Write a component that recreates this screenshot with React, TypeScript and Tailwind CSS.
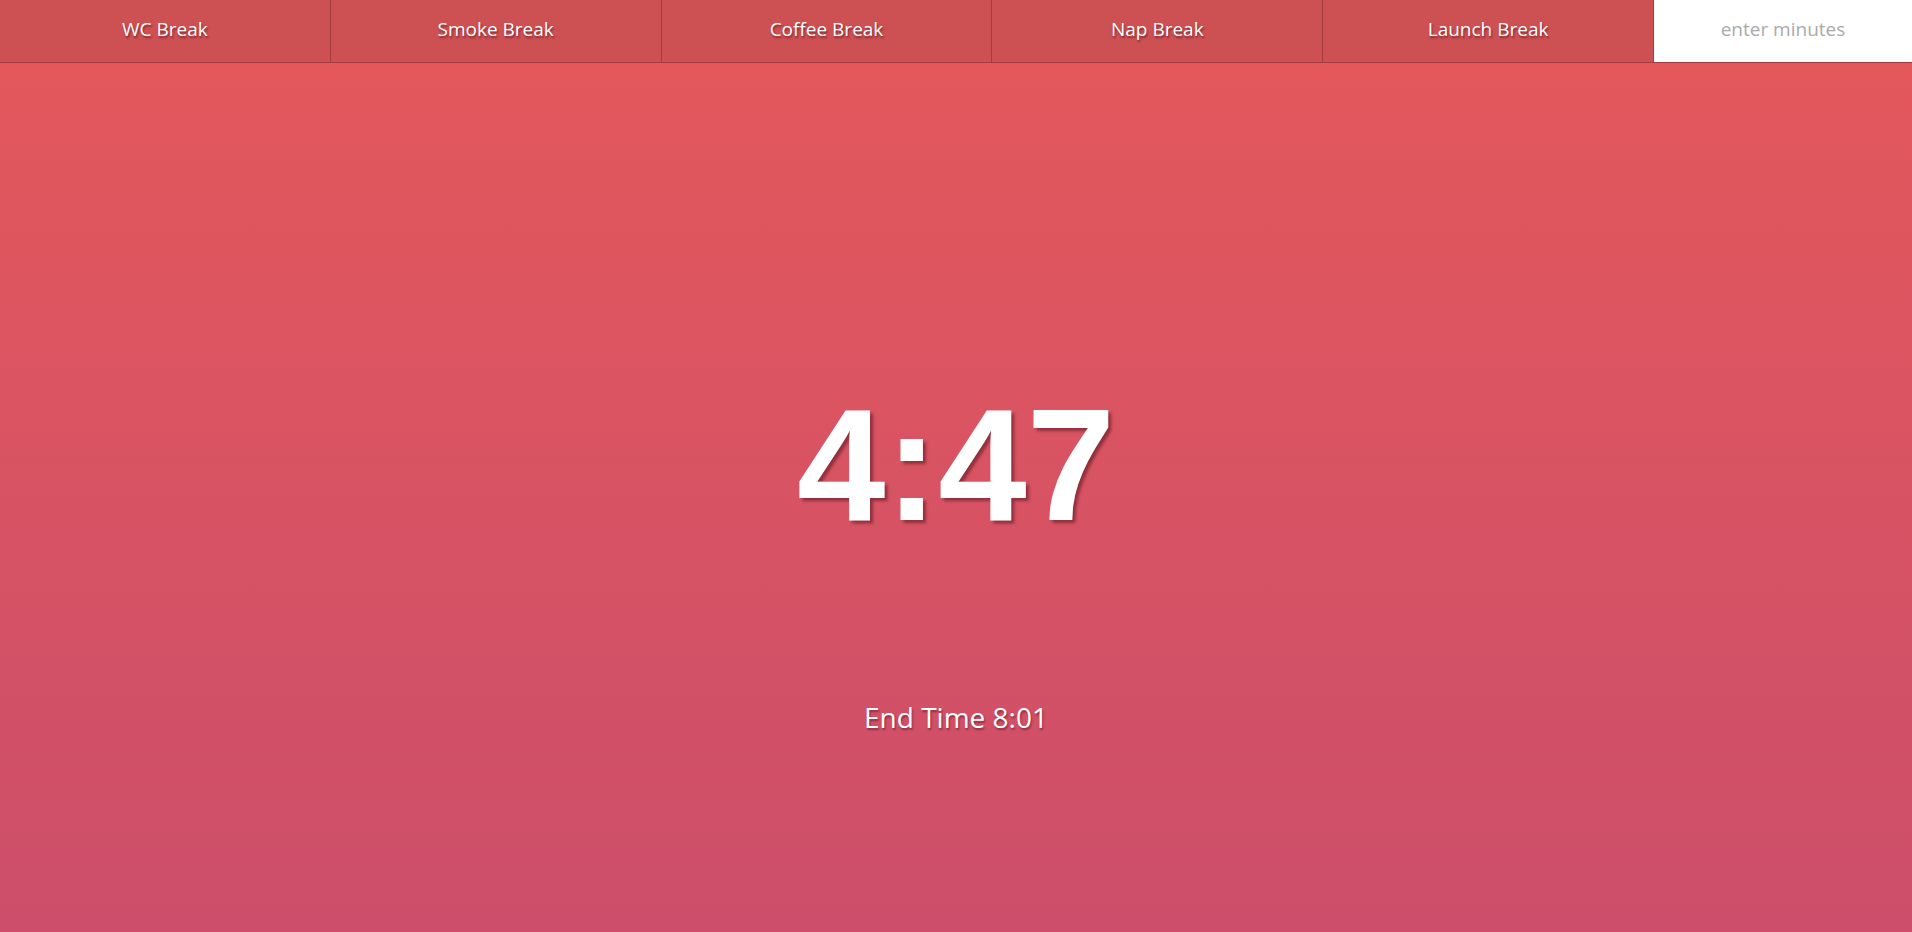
const breaks = ["WC Break", "Smoke Break", "Coffee Break", "Nap Break", "Launch Break"];

export default function App() {
  return (
    <div className="flex h-[932px] w-full flex-col bg-gradient-to-b from-[#e5585a] to-[#cc4e6a] font-['Open_Sans',sans-serif] text-white">
      <div className="flex h-[63px] w-full border-b border-[#a63c40] bg-[#cd5053]">
        {breaks.map((b, i) => (
          <button
            key={b}
            className={
              "flex flex-1 items-center justify-center pb-[3px] text-[19px] text-white [text-shadow:1px_2px_2px_rgba(80,10,20,0.55)] " +
              (i > 0 ? "border-l border-[#a63c40]" : "")
            }
          >
            {b}
          </button>
        ))}
        <input
          className="w-[259px] border-l border-[#a63c40] bg-white pb-[3px] text-center text-[19px] text-gray-700 outline-none placeholder:text-[#aaaaaa]"
          placeholder="enter minutes"
        />
      </div>
      <div className="flex flex-col items-center pt-[323px]">
        <div className="font-['Liberation_Sans',Arial,sans-serif] text-[159px] leading-none font-bold [text-shadow:3px_3px_3px_rgba(90,20,30,0.55)]">
          4:47
        </div>
        <div className="mt-[154px] text-[28px] leading-9 [text-shadow:1px_2px_2px_rgba(80,10,30,0.5)]">
          End Time 8:01
        </div>
      </div>
    </div>
  );
}
